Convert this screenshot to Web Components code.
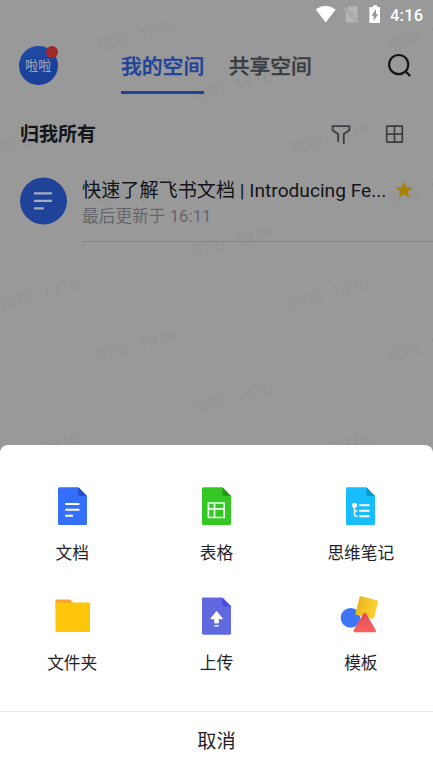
<!DOCTYPE html>
<html lang="zh-CN">
<head>
<meta charset="utf-8">
<title>我的空间</title>
<style>
body{margin:0;width:433px;height:769px;overflow:hidden;background:#999;font-family:Roboto,"Noto Sans CJK SC",sans-serif;color:#13151a}
</style>
</head>
<body>
<space-app></space-app>
<script>
const define=(name,html,setup)=>customElements.define(name,class extends HTMLElement{
  constructor(){
    super();
    const t=document.createElement('template');
    t.innerHTML=html;
    this.attachShadow({mode:'open'}).append(t.content.cloneNode(true));
  }
  connectedCallback(){if(setup)setup(this,this.shadowRoot)}
});

define('water-mark',`<style>
:host{position:absolute;inset:0;overflow:hidden;pointer-events:none}
span{position:absolute;width:90px;height:20px;margin:-10px 0 0 -45px;font:16.5px/20px Roboto,"Noto Sans CJK SC",sans-serif;text-align:center;white-space:pre;color:rgba(40,44,52,.065);transform:rotate(-15deg);letter-spacing:.3px}
</style>`,(el,root)=>{
  const rows=[[35.5,136.5],[87,232.5],[138.5,40],[190.5,136.5],[242,232.5],[293.5,40],[345.5,136.5],[397.5,232.5],[448.5,40]];
  for(const [y,x0] of rows)for(const x of [x0-290,x0,x0+290]){
    if(x<-46||x>480)continue;
    const s=document.createElement('span');
    s.textContent='啦啦  1976';
    s.style.left=x+'px';s.style.top=y+'px';
    root.append(s);
  }
});

define('status-bar',`<style>
:host{display:flex;height:30px;align-items:center;justify-content:flex-end;padding-right:9px;box-sizing:border-box;color:#fff}
svg{display:block}
.t{font:500 16.5px/20px Roboto,sans-serif;letter-spacing:.2px;margin:2px 0 0 9px;width:34px;white-space:nowrap}
</style>
<svg width="65" height="22" viewBox="0 0 65 22"><path d="M-.3 5.4Q9.7-1.7 19.7 5.4L9.7 18.5Z" fill="#fff"/><path d="M33 2.4h7.5q1 0 1 1v12.2L31 4.4ZM29.6 7l11 11.5H30.8q-1.2 0-1.2-1.2Z" fill="#b5b5b5"/><path d="m28 3.5 14.4 15" stroke="#b5b5b5" stroke-width="1.3"/><path d="M57.2 1.2h4v1.7h2.8v16H53.4v-16h3.8Z" fill="#fff"/><path d="M60 5v5h2.1l-4.4 7v-5.2h-2.2Z" fill="#999"/></svg>
<span class="t">4:16</span>`);

define('user-avatar',`<style>
:host{display:block;position:relative;width:38.5px;height:38.5px;border-radius:50%;background:linear-gradient(155deg,#214ba8,#183d93);color:#a6adb6;font-size:13px;line-height:39px;text-align:center}
i{position:absolute;right:-.5px;top:-.5px;width:12px;height:12px;border-radius:50%;background:#a02927}
</style><slot></slot><i></i>`);

define('space-tab',`<style>
:host{display:block;box-sizing:border-box;height:42px;padding-top:1.5px;font-size:20.8px;line-height:27px;font-weight:500;-webkit-text-stroke:.35px currentColor;color:#3b3e43;border-bottom:3px solid transparent;white-space:nowrap}
:host([active]){color:#1f4399;border-color:#1f4399}
</style><slot></slot>`);

define('top-bar',`<style>
:host{display:flex;height:76px;box-sizing:border-box;padding:16px 20px 0 19px;align-items:flex-start}
nav{display:flex;gap:24.5px;margin:6px auto 0 63.5px}
svg{display:block;margin-top:6px}
</style><user-avatar>啦啦</user-avatar>
<nav><space-tab active>我的空间</space-tab><space-tab>共享空间</space-tab></nav>
<svg width="27" height="27" viewBox="0 0 27 27" fill="none" stroke="#13151a" stroke-width="2.2" stroke-linecap="round"><circle cx="12.7" cy="12.6" r="9.6"/><path d="m19.8 19.6 3.8 3.8"/></svg>`);

define('section-bar',`<style>
:host{display:flex;height:56px;box-sizing:border-box;padding:1px 29px 0 20px;align-items:center;font-size:19px;line-height:28px;font-weight:700}
span{padding-top:1px}
svg{display:block}
.f{margin-left:auto;margin-right:33px}
</style><span><slot></slot></span>
<svg class="f" width="20" height="20" viewBox="0 0 20 20" fill="none" stroke="#3b3e43" stroke-width="1.8"><path d="M7.2 16.8V9L1.6 5.2V1.1h16.8v4.1L12.8 9v10"/></svg>
<svg width="20" height="20" viewBox="0 0 20 20" fill="none" stroke="#3b3e43" stroke-width="1.7"><rect x="2.7" y="1.2" width="15.6" height="16" rx=".5"/><path d="M10.5 1.2v16M2.7 9.2h15.6"/></svg>`);

define('doc-row',`<style>
:host{display:flex;height:80px;box-sizing:border-box;padding-left:20px}
.i{display:block;margin:14.5px 15px 0 0;flex:none}
.b{flex:1;border-bottom:1px solid #858585;padding-top:14.5px;box-sizing:border-box;min-width:0}
.h{display:flex;font-size:19.15px;line-height:28px;white-space:nowrap}
.n{width:305px}
.s{display:block;margin:4.5px 0 0 8px}
.m{font-size:16.6px;line-height:24px;color:#63666c;letter-spacing:.1px;padding-top:.5px}
</style>
<svg class="i" width="47" height="48" viewBox="0 0 47 48"><circle cx="23.5" cy="24" r="23.5" fill="#1f4399"/><path d="M14 16.3h18M14 23.8h18M14 31.3h9.8" stroke="#a6adbd" stroke-width="2.2"/></svg>
<div class="b"><div class="h"><span class="n"><slot name="title"></slot></span><svg class="s" width="18" height="17" viewBox="0 0 18 17"><path d="m9 .4 2.4 5.6 6 .5-4.5 4.1 1.3 5.9L9 13.5l-5.2 3 1.3-5.9L.6 6.5l6-.5Z" fill="#ab8209"/></svg></div><div class="m"><slot name="meta"></slot></div></div>`);

/* File glyph with a folded corner, shared by four of the items. */
const sheet=(c,d,inner)=>`<path d="M9.5 5.2h18.8l8.7 8.8v27.5q0 1.5-1.5 1.5h-26Q8 43 8 41.5V6.7q0-1.5 1.5-1.5Z" fill="${c}"/><path d="M28.3 5.2 37 14h-7q-1.7 0-1.7-1.7Z" fill="${d}"/>${inner}`;
const icons={
doc:sheet('#336ffb','#2350c5','<path d="M15.2 22h14.2M15.2 27.8h14.2M15.2 33.8h7.8" stroke="#fff" stroke-width="2"/>'),
table:sheet('#35c724','#239a17','<path d="M14.4 21h15.8v14.5H14.4ZM14.4 26.8h15.8M20.5 21v14.5" fill="none" stroke="#eaffea" stroke-width="1.7"/>'),
mind:sheet('#17bdfd','#089acd','<circle cx="16.5" cy="23.3" r="2.5" fill="#fff"/><path d="M16.5 23.3v9q0 2 2 2h1.2M16.5 28.7h2.8" stroke="#fff" stroke-width="1.5" fill="none"/><path d="M21.3 23.3h10.2M21.3 28.7h10.2M21.3 34.2h10.2" stroke="#fff" stroke-width="2"/>'),
folder:'<path d="M5.5 8.9q0-1.5 1.5-1.5h12.2q1 0 1.7.8l2.4 3v6H5.5Z" fill="#fb9f38"/><path d="M5.5 10.6h33q1.5 0 1.5 1.5v26.4q0 1.5-1.5 1.5H7q-1.5 0-1.5-1.5Z" fill="#ffc60a"/>',
upload:sheet('#6069df','#454cde','<path d="m22.6 19.4 5.9 7.4h-4v4.3h-3.8v-4.3h-4Z" fill="#fff" stroke="#fff" stroke-linejoin="round"/><path d="M20.5 34h4.2" stroke="#fff" stroke-width="1.5"/>').replace(/^/,'<g transform="translate(0 .4) scale(1 .982)">')+'</g>',
template:'<defs><linearGradient id="y"><stop stop-color="#e9b91d"/><stop offset="1" stop-color="#ffd033"/></linearGradient><linearGradient id="r" x2="0" y2="1"><stop stop-color="#e34a50"/><stop offset="1" stop-color="#fb6261"/></linearGradient></defs><g transform="translate(.6 1.6)"><circle cx="12" cy="24.2" r="9.9" fill="#3e74f6"/><rect x="18.6" y="4.4" width="19.2" height="19.2" rx="1.5" transform="rotate(14 28.2 14)" fill="url(#y)"/><path d="M24.9 20q1.3-1.7 2.6 0l9.6 16.4q1 2-1 2.2H16.2q-2-.2-1-2.2Z" fill="url(#r)"/></g>'
};

define('create-item',`<style>
:host{display:flex;flex-direction:column;align-items:center;font-size:16.7px;line-height:24px;color:#1f2329;white-space:nowrap}
svg{display:block;margin-bottom:13.5px}
</style><svg width="45" height="46" viewBox="0 0 45 46"></svg><slot></slot>`,(el,root)=>{
  root.querySelector('svg').innerHTML=icons[el.getAttribute('icon')];
});

define('action-sheet',`<style>
:host{position:absolute;left:0;right:0;bottom:0;height:324.5px;background:#fff;border-radius:8px 8px 0 0;overflow:hidden;display:flex;flex-direction:column}
.g{display:grid;grid-template-columns:repeat(3,1fr);grid-template-rows:110px 110px;height:266px;padding-top:37.5px;box-sizing:border-box}
button{flex:1;border:0;border-top:1.5px solid #eaebec;background:#fff;font:19.2px/28px Roboto,"Noto Sans CJK SC",sans-serif;color:#1f2329;padding:3px 0 0}
</style><div class="g"><slot></slot></div><button>取消</button>`);

define('space-app',`<style>
:host{display:block;position:relative;width:433px;height:769px;overflow:hidden;background:#999}
</style>
<status-bar></status-bar>
<top-bar></top-bar>
<section-bar>归我所有</section-bar>
<doc-row><span slot="title">快速了解飞书文档 | Introducing Fe...</span><span slot="meta">最后更新于 16:11</span></doc-row>
<water-mark></water-mark>
<action-sheet>
<create-item icon="doc">文档</create-item><create-item icon="table">表格</create-item><create-item icon="mind">思维笔记</create-item>
<create-item icon="folder">文件夹</create-item><create-item icon="upload">上传</create-item><create-item icon="template">模板</create-item>
</action-sheet>`);
</script>
</body>
</html>
